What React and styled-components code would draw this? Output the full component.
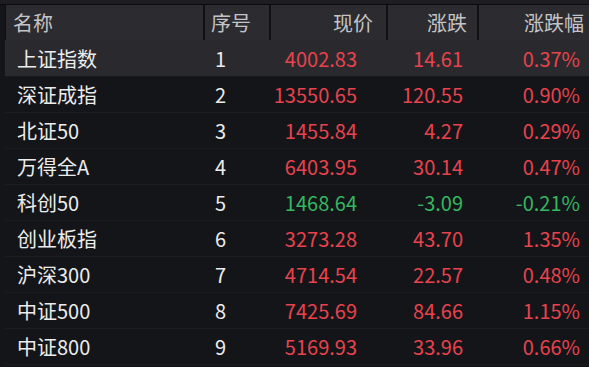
import React from "react";
import styled, { createGlobalStyle } from "styled-components";

const Global = createGlobalStyle`
  html, body { margin: 0; padding: 0; background: #141519; }
  body { font-family: "Noto Sans CJK SC", "Noto Sans", sans-serif; }
`;

const COLS = "199px 66px 117px 91px 1fr";

const Page = styled.div`
  width: 589px;
  height: 367px;
  background: #141519;
  overflow: hidden;
  display: flex;
  flex-direction: column;
`;

const TopStrip = styled.div`
  height: 4px;
  background: #1e1e21;
  border-bottom: 1px solid #0c0c0e;
`;

const Header = styled.div`
  display: grid;
  grid-template-columns: ${COLS};
  margin-left: 5px;
  height: 35px;
  background: #2c2c30;
  border-left: 1px solid #0e0e10;
`;

const HeadCell = styled.div`
  display: flex;
  align-items: center;
  justify-content: ${(p) => (p.$right ? "flex-end" : "flex-start")};
  padding: ${(p) => p.$pad};
  color: #c4c4c6;
  font-size: 20px;
  border-right: ${(p) => (p.$last ? "none" : "2px solid #111113")};
`;

const Row = styled.div`
  display: grid;
  grid-template-columns: ${COLS};
  margin-left: 5px;
  height: ${(p) => (p.$first ? 37 : 36)}px;
  background: ${(p) => (p.$active ? "#2a2a2e" : "#141519")};
  border-bottom: 1px solid ${(p) => (p.$active ? "#1a1a1d" : "#1b1c20")};
  box-sizing: border-box;
`;

const Cell = styled.div`
  display: flex;
  align-items: center;
  justify-content: ${(p) => (p.$right ? "flex-end" : "flex-start")};
  padding: ${(p) => p.$pad};
  color: ${(p) => p.$color || "#ececec"};
  font-size: 20px;
  white-space: nowrap;
`;

const data = [
  ["上证指数", 1, "4002.83", "14.61", "0.37%"],
  ["深证成指", 2, "13550.65", "120.55", "0.90%"],
  ["北证50", 3, "1455.84", "4.27", "0.29%"],
  ["万得全A", 4, "6403.95", "30.14", "0.47%"],
  ["科创50", 5, "1468.64", "-3.09", "-0.21%"],
  ["创业板指", 6, "3273.28", "43.70", "1.35%"],
  ["沪深300", 7, "4714.54", "22.57", "0.48%"],
  ["中证500", 8, "7425.69", "84.66", "1.15%"],
  ["中证800", 9, "5169.93", "33.96", "0.66%"],
];

const RED = "#e8424d";
const GREEN = "#35b760";

export default function App() {
  return (
    <>
      <Global />
      <Page>
        <TopStrip />
        <Header>
          <HeadCell $pad="0 0 0 7px">名称</HeadCell>
          <HeadCell $pad="0 0 0 6px">序号</HeadCell>
          <HeadCell $right $pad="0 13px 0 0">现价</HeadCell>
          <HeadCell $right $pad="0 10px 0 0">涨跌</HeadCell>
          <HeadCell $right $last $pad="0 5px 0 0">涨跌幅</HeadCell>
        </Header>
        {data.map(([name, idx, price, chg, pct], i) => {
          const c = chg.startsWith("-") ? GREEN : RED;
          return (
            <Row key={name} $active={i === 0} $first={i === 0}>
              <Cell $pad="0 0 0 12px">{name}</Cell>
              <Cell $pad="0 0 0 11px">{idx}</Cell>
              <Cell $right $color={c} $pad="0 30px 0 0">{price}</Cell>
              <Cell $right $color={c} $pad="0 15px 0 0">{chg}</Cell>
              <Cell $right $color={c} $pad="0 9px 0 0">{pct}</Cell>
            </Row>
          );
        })}
      </Page>
    </>
  );
}
